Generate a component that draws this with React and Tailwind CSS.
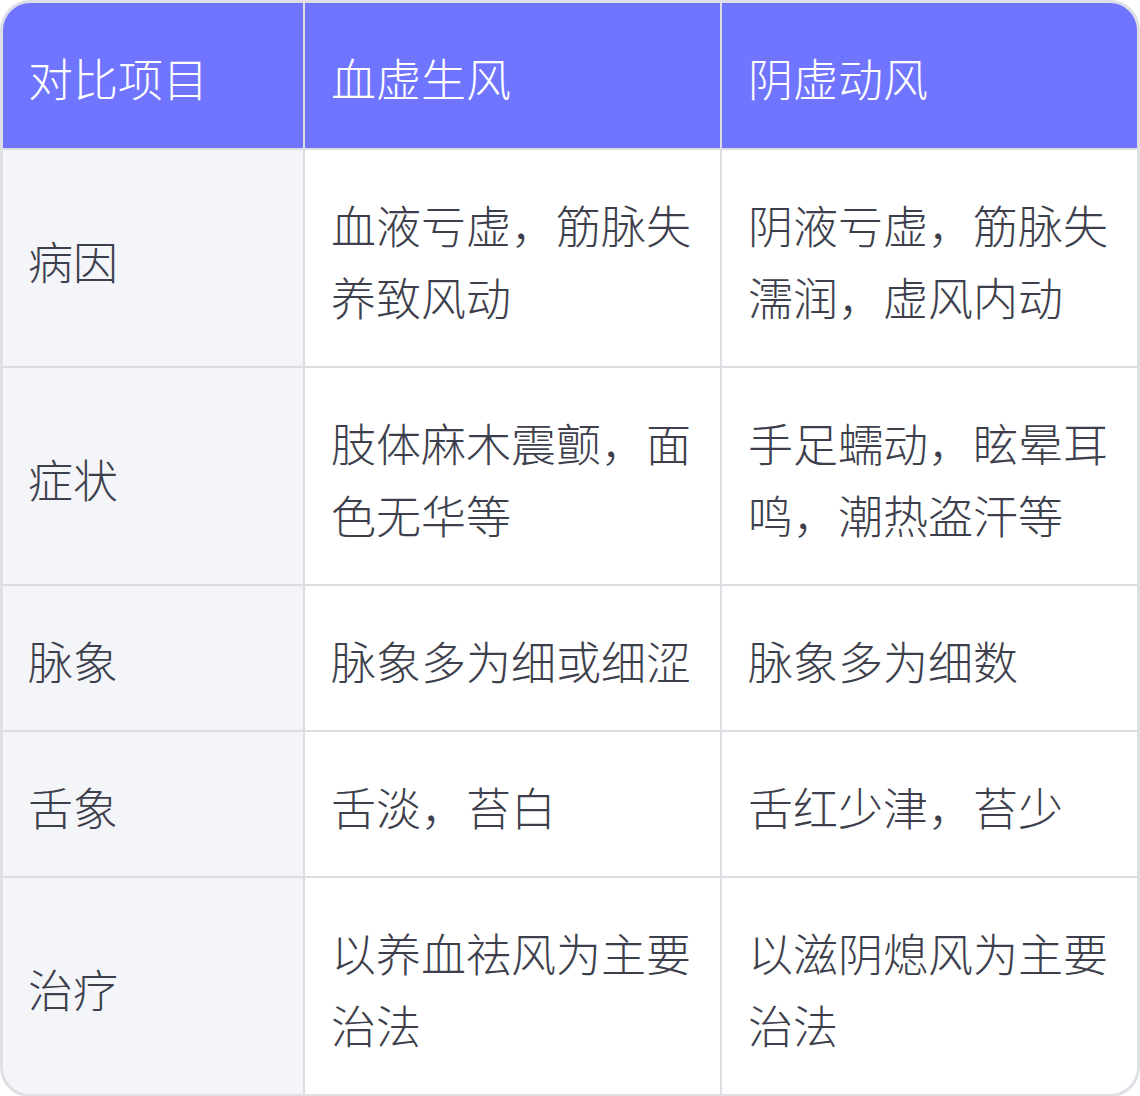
import React from "react";

const rows = [
  ["病因", "血液亏虚，筋脉失养致风动", "阴液亏虚，筋脉失濡润，虚风内动"],
  ["症状", "肢体麻木震颤，面色无华等", "手足蠕动，眩晕耳鸣，潮热盗汗等"],
  ["脉象", "脉象多为细或细涩", "脉象多为细数"],
  ["舌象", "舌淡，苔白", "舌红少津，苔少"],
  ["治疗", "以养血祛风为主要治法", "以滋阴熄风为主要治法"],
];

const App = () => {
  return (
    <div
      className="w-[1140px] h-[1096px] bg-white"
      style={{ fontFamily: '"Noto Sans CJK SC", "Noto Sans", sans-serif' }}
    >
      <div className="border-[3px] border-[#dfe0e5] rounded-[30px] overflow-hidden">
        <div className="grid grid-cols-[300px_415px_1fr] gap-[2px] bg-[#dcdde2] font-light">
          {["对比项目", "血虚生风", "阴虚动风"].map((h, i) => (
            <div
              key={h}
              className={`bg-[#7075ff] text-white text-[45px] leading-[72px] pr-[20px] pt-[39px] pb-[34px] ${i === 0 ? "pl-[25px]" : "pl-[26px]"}`}
            >
              {h}
            </div>
          ))}
          {rows.map((r) => (
            <React.Fragment key={r[0]}>
              <div className="bg-[#f4f5f9] text-[#3d404c] text-[45px] leading-[72px] pl-[25px] pr-[20px] pt-[39px] pb-[33px] flex items-center">
                {r[0]}
              </div>
              <div className="bg-white text-[#3d404c] text-[45px] leading-[72px] pl-[26px] pr-[16px] pt-[39px] pb-[33px] flex items-center">
                {r[1]}
              </div>
              <div className="bg-white text-[#3d404c] text-[45px] leading-[72px] pl-[26px] pr-[16px] pt-[39px] pb-[33px] flex items-center">
                {r[2]}
              </div>
            </React.Fragment>
          ))}
        </div>
      </div>
    </div>
  );
};

export default App;
